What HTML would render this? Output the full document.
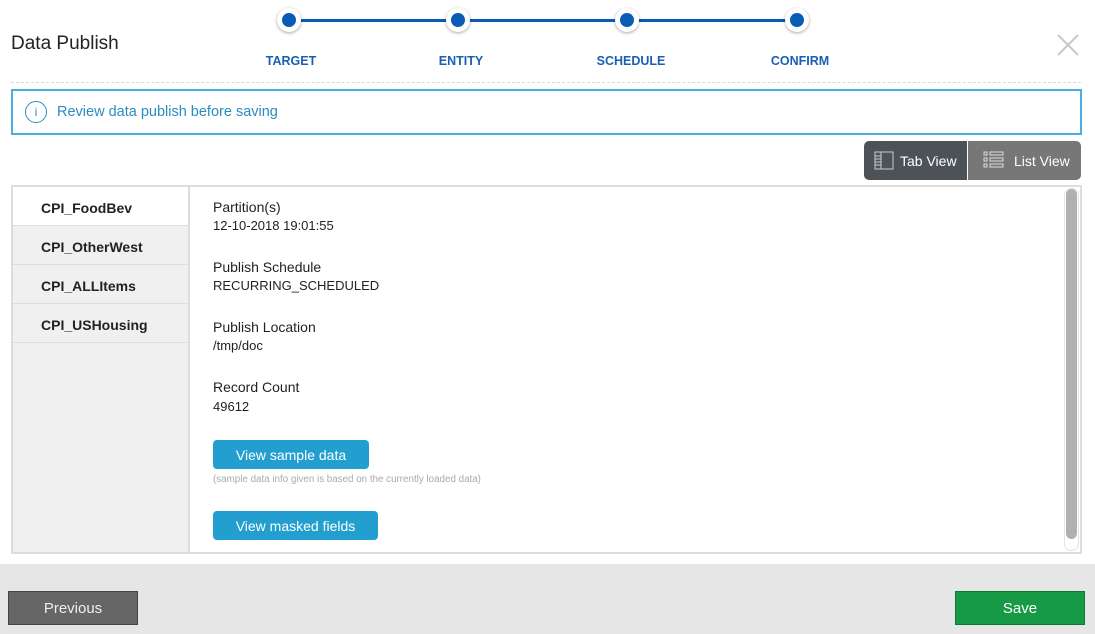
<!DOCTYPE html>
<html><head><style>
*{margin:0;padding:0;box-sizing:border-box}
body{width:1095px;height:634px;background:#fff;font-family:"Liberation Sans",sans-serif;position:relative;overflow:hidden;color:#222}
.a{position:absolute}
.lab{position:absolute;top:54px;font-size:12.5px;font-weight:bold;color:#1a5fb4;transform:translateX(-50%)}
.dot{position:absolute;top:8px;width:24px;height:24px;border-radius:50%;background:#fff;box-shadow:0 1px 3px rgba(0,0,0,.35)}
.dot::after{content:"";position:absolute;left:5px;top:5px;width:14px;height:14px;border-radius:50%;background:#0a5bb5}
.item{height:39px;border-bottom:1px solid #ddd;font-size:14px;font-weight:bold;padding:13px 0 0 28px;color:#222}
.h{position:absolute;left:213px;font-size:14px;color:#222}
.v{position:absolute;left:213px;font-size:13px;color:#222}
.btn{position:absolute;background:#239fcf;color:#fff;font-size:14px;border-radius:4px;text-align:center;line-height:30px}
</style></head><body>
<div class="a" style="left:11px;top:33px;font-size:19px">Data Publish</div>
<div class="a" style="left:289px;top:19px;width:508px;height:3px;background:#0a5bb5"></div>
<div class="dot" style="left:277px"></div>
<div class="dot" style="left:446px"></div>
<div class="dot" style="left:615px"></div>
<div class="dot" style="left:785px"></div>
<div class="lab" style="left:291px">TARGET</div>
<div class="lab" style="left:461px">ENTITY</div>
<div class="lab" style="left:631px">SCHEDULE</div>
<div class="lab" style="left:800px">CONFIRM</div>
<svg class="a" style="left:1056px;top:33px" width="24" height="24"><path d="M2 2L22 22M22 2L2 22" stroke="#c8c8c8" stroke-width="2"/></svg>
<div class="a" style="left:11px;top:82px;width:1070px;border-top:1px dashed #e2d4da"></div>
<div class="a" style="left:11px;top:89px;width:1071px;height:46px;border:2px solid #4aaee0"></div>
<div class="a" style="left:25px;top:101px;width:22px;height:22px;border:1px solid #2a8cc0;border-radius:50%;color:#2a8cc0;font-size:12px;text-align:center;line-height:20px">i</div>
<div class="a" style="left:57px;top:104px;font-size:14.5px;color:#2a8cc0">Review data publish before saving</div>
<div class="a" style="left:864px;top:141px;width:103px;height:39px;background:#4d5257;border-radius:5px 0 0 5px;color:#fff;font-size:14px;line-height:40px;padding-left:36px">Tab View</div>
<svg class="a" style="left:874px;top:151px" width="20" height="19"><rect x="1" y="1" width="18" height="17" fill="none" stroke="#ccc"/><path d="M7 1V18M1 5H7M1 8H7M1 11H7M1 14H7" stroke="#ccc"/></svg>
<div class="a" style="left:968px;top:141px;width:113px;height:39px;background:#777;border-radius:0 5px 5px 0;color:#fff;font-size:14px;line-height:40px;padding-left:46px">List View</div>
<svg class="a" style="left:983px;top:151px" width="22" height="18"><g fill="none" stroke="#ddd"><rect x="1" y="1" width="3" height="3"/><rect x="1" y="7" width="3" height="3"/><rect x="1" y="13" width="3" height="3"/><rect x="7" y="1" width="13" height="3"/><rect x="7" y="7" width="13" height="3"/><rect x="7" y="13" width="13" height="3"/></g></svg>
<div class="a" style="left:11px;top:185px;width:1071px;height:369px;border:2px solid #ddd"></div>
<div class="a" style="left:13px;top:187px;width:177px;height:365px;background:#f0f0f0;border-right:2px solid #ddd">
<div class="item" style="background:#fff">CPI_FoodBev</div>
<div class="item">CPI_OtherWest</div>
<div class="item">CPI_ALLItems</div>
<div class="item">CPI_USHousing</div>
</div>
<div class="a" style="left:1064px;top:188px;width:15px;height:363px;border:1px solid #e4e4e4;border-radius:7px"></div>
<div class="a" style="left:1066px;top:189px;width:11px;height:350px;background:#b0b0b0;border-radius:6px"></div>
<div class="h" style="top:199px">Partition(s)</div><div class="v" style="top:218px">12-10-2018 19:01:55</div>
<div class="h" style="top:259px">Publish Schedule</div><div class="v" style="top:278px">RECURRING_SCHEDULED</div>
<div class="h" style="top:319px">Publish Location</div><div class="v" style="top:338px">/tmp/doc</div>
<div class="h" style="top:379px">Record Count</div><div class="v" style="top:399px">49612</div>
<div class="btn" style="left:213px;top:440px;width:156px;height:29px">View sample data</div>
<div class="a" style="left:213px;top:474px;font-size:9.8px;color:#aaa">(sample data info given is based on the currently loaded data)</div>
<div class="btn" style="left:213px;top:511px;width:165px;height:29px">View masked fields</div>
<div class="a" style="left:0;top:564px;width:1095px;height:70px;background:#e6e6e6"></div>
<div class="a" style="left:8px;top:591px;width:130px;height:34px;background:#666;border:1px solid #444;color:#eee;font-size:15px;text-align:center;line-height:34px">Previous</div>
<div class="a" style="left:955px;top:591px;width:130px;height:34px;background:#169a45;border:1px solid #0e7a35;color:#fff;font-size:15px;text-align:center;line-height:34px">Save</div>
</body></html>
